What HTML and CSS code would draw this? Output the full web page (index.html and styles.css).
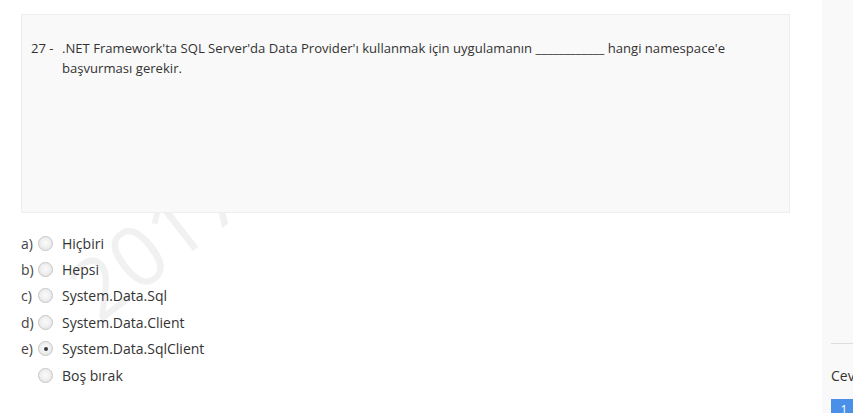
FILE: index.html
```html
<!DOCTYPE html>
<html lang="tr">
<head>
<meta charset="utf-8">
<link rel="stylesheet" href="styles.css">
</head>
<body>
<div class="page">
  <main class="main">
    <div class="watermark">2017</div>
    <div class="question">
      <span class="qnum">27 -</span>
      <span class="qtext">.NET Framework'ta SQL Server'da Data Provider'ı kullanmak için uygulamanın ____________ hangi namespace'e başvurması gerekir.</span>
    </div>
    <ul class="options">
      <li class="option"><span class="letter">a)</span><span class="radio"></span><span class="label">Hiçbiri</span></li>
      <li class="option"><span class="letter">b)</span><span class="radio"></span><span class="label">Hepsi</span></li>
      <li class="option"><span class="letter">c)</span><span class="radio"></span><span class="label">System.Data.Sql</span></li>
      <li class="option"><span class="letter">d)</span><span class="radio"></span><span class="label">System.Data.Client</span></li>
      <li class="option"><span class="letter">e)</span><span class="radio checked"></span><span class="label">System.Data.SqlClient</span></li>
      <li class="option"><span class="letter"></span><span class="radio"></span><span class="label">Boş bırak</span></li>
    </ul>
  </main>
  <aside class="sidebar">
    <div class="side-top"></div>
    <div class="side-title">Cevap</div>
    <div class="side-nums"><span class="num">1</span></div>
  </aside>
</div>
</body>
</html>
```

FILE: styles.css
```css
html, body {
  margin: 0;
  padding: 0;
  background: #fff;
  font-family: "Open Sans", "Noto Sans", sans-serif;
  color: #333;
  overflow: hidden;
}
.page {
  display: flex;
  width: 853px;
  height: 413px;
}
.main {
  position: relative;
  width: 822px;
  flex: none;
  box-sizing: border-box;
  padding: 14px 32px 0 21px;
}
.watermark {
  position: absolute;
  left: 100px;
  top: 250px;
  font-size: 84px;
  line-height: 1;
  color: #f1f1f1;
  transform: rotate(-38deg);
  transform-origin: 0 75px;
  pointer-events: none;
  white-space: nowrap;
}
.question {
  position: relative;
  height: 199px;
  box-sizing: border-box;
  background: #f9f9f9;
  border: 1px solid #eeeeee;
  padding: 23px 40px 0 9px;
  display: flex;
  font-size: 13.1px;
  line-height: 20px;
  color: #333;
}
.qnum {
  flex: none;
  width: 31px;
}
.qtext {
  flex: 1;
}
.options {
  position: relative;
  list-style: none;
  margin: 17px 0 0 0;
  padding: 0;
}
.option {
  display: flex;
  align-items: center;
  height: 26.4px;
  font-size: 14px;
}
.letter {
  width: 17px;
  flex: none;
  color: #444;
}
.radio {
  flex: none;
  width: 15px;
  height: 15px;
  border-radius: 50%;
  border: 1px solid #c6c6c6;
  background: radial-gradient(circle at 50% 45%, #fafafa 0, #f0f0f0 45%, #dedede 100%);
  margin-right: 9px;
  position: relative;
  box-sizing: border-box;
}
.radio.checked::after {
  content: "";
  position: absolute;
  left: 4.5px;
  top: 4.5px;
  width: 4px;
  height: 4px;
  border-radius: 50%;
  background: #3a3a3a;
}
.label {
  color: #333;
}
.sidebar {
  flex: 1;
  background: #f9f9f9;
  padding-left: 9px;
}
.side-top {
  height: 343px;
  border-bottom: 1px solid #dddddd;
}
.side-title {
  margin-top: 22px;
  font-size: 14px;
  line-height: 20px;
  white-space: nowrap;
  color: #333;
}
.side-nums {
  margin-top: 11px;
}
.num {
  display: inline-block;
  width: 26px;
  height: 22px;
  background: #4a90e8;
  color: #fff;
  font-size: 12px;
  text-align: center;
  line-height: 22px;
}
```
